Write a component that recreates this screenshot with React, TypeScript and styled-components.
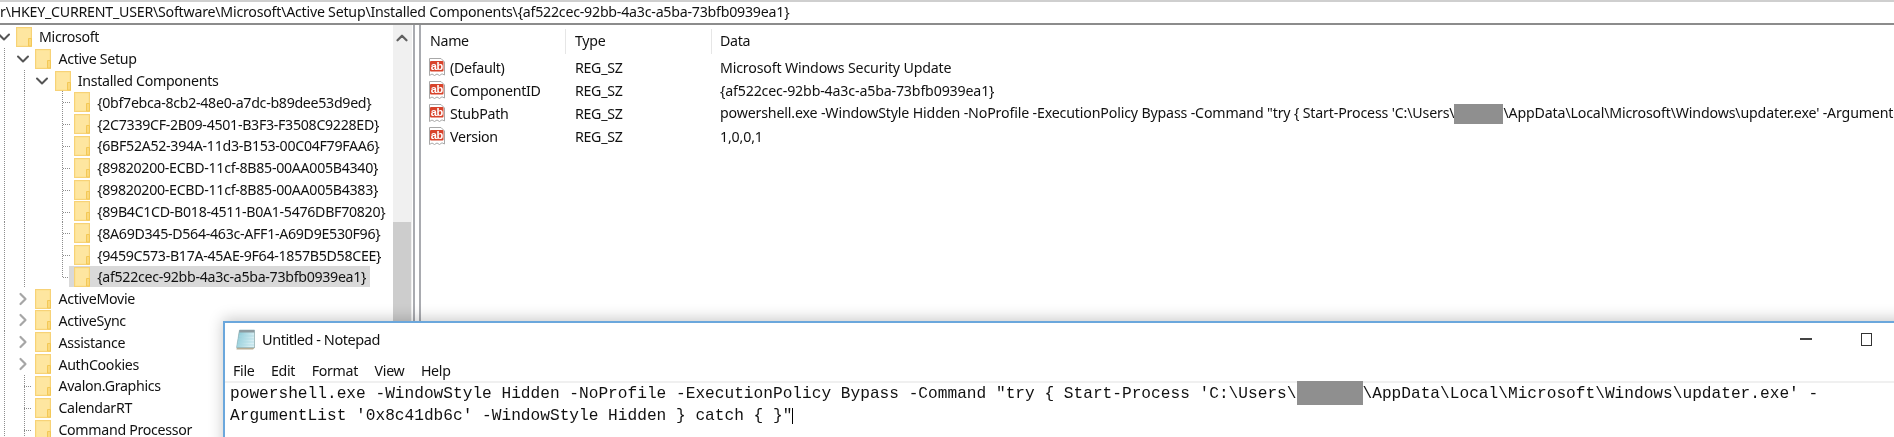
import React from "react";
import styled, {createGlobalStyle} from "styled-components";
import {ChevronDown, ChevronRight, ChevronUp} from "lucide-react";

const UI_FONT = `"Noto Sans", "Liberation Sans", sans-serif`;
const USER_HIDDEN = "\u00a0";

type Guide = "none" | "line" | "tee" | "end";
type TreeItem = {
	label: string;
	guides: Guide[];
	expander?: "open" | "closed";
	selected?: boolean;
};

const guid = (label: string, last = false, selected = false): TreeItem => ({
	label,
	guides: ["line", "line", "none", last ? "end" : "tee"],
	selected,
});

const top = (label: string, expander?: "closed"): TreeItem => ({
	label,
	guides: expander ? ["line"] : ["line", "tee"],
	expander,
});

const treeItems: TreeItem[] = [
	{label: "Microsoft", guides: [], expander: "open"},
	{label: "Active Setup", guides: ["line"], expander: "open"},
	{label: "Installed Components", guides: ["line", "line"], expander: "open"},
	guid("{0bf7ebca-8cb2-48e0-a7dc-b89dee53d9ed}"),
	guid("{2C7339CF-2B09-4501-B3F3-F3508C9228ED}"),
	guid("{6BF52A52-394A-11d3-B153-00C04F79FAA6}"),
	guid("{89820200-ECBD-11cf-8B85-00AA005B4340}"),
	guid("{89820200-ECBD-11cf-8B85-00AA005B4383}"),
	guid("{89B4C1CD-B018-4511-B0A1-5476DBF70820}"),
	guid("{8A69D345-D564-463c-AFF1-A69D9E530F96}"),
	guid("{9459C573-B17A-45AE-9F64-1857B5D58CEE}"),
	guid("{af522cec-92bb-4a3c-a5ba-73bfb0939ea1}", true, true),
	top("ActiveMovie", "closed"),
	top("ActiveSync", "closed"),
	top("Assistance", "closed"),
	top("AuthCookies", "closed"),
	top("Avalon.Graphics"),
	top("CalendarRT"),
	top("Command Processor"),
];

const Folder = () => (
	<svg width="16" height="20" viewBox="0 0 16 20" style={{flex: "none"}}>
		<rect x="0.5" y="0.5" width="15" height="19" fill="#fde08b" stroke="#f7d277" />
		<rect x="1.5" y="1.5" width="13" height="17" fill="#fee6a0" />
		<path d="M12.5 19V11.5H15.5V19Z" fill="#fbd97c" stroke="#f3c857" />
	</svg>
);

const StringIcon = () => (
	<svg width="16" height="19" viewBox="0 0 16 19" style={{flex: "none"}}>
		<path
			d="M0.5 0.5H12L15.5 4V17L13 15.8L10.5 17.5L8 16L5.5 17.5L3 16L0.5 17.5Z"
			fill="#fff"
			stroke="#a8a8a8"
		/>
		<rect x="1" y="3" width="13.5" height="10.5" rx="1" fill="#d8432b" />
		<text
			x="7.7"
			y="11.8"
			textAnchor="middle"
			fontFamily="Liberation Sans, sans-serif"
			fontWeight="700"
			fontSize="11"
			letterSpacing="-0.4"
			fill="#fff"
		>
			ab
		</text>
	</svg>
);

const NotepadIcon = () => (
	<svg width="21" height="21" viewBox="0 0 21 21" style={{flex: "none"}}>
		<defs>
			<linearGradient id="page" x1="0" y1="0" x2="1" y2="0.4">
				<stop offset="0" stopColor="#7fc4d2" />
				<stop offset="1" stopColor="#d9eff4" />
			</linearGradient>
		</defs>
		<path d="M4 2.5H20V18.5L18 20.5H1.5Z" fill="#b8ad94" />
		<path d="M4.5 1H19.5V18.5H1.5Z" fill="url(#page)" stroke="#8fb6bf" strokeWidth="0.6" />
		<path d="M4.5 1H19.5V3.5H4.2Z" fill="#8c9ba0" />
		<path d="M4 7H19M3.5 10H19M3 13H19M2.5 16H19" stroke="#a9d8e2" strokeWidth="0.7" />
	</svg>
);

const GuideCell = styled.span<{$kind: Guide}>`
	flex: 0 0 19.4px;
	align-self: stretch;
	background-repeat: no-repeat;
	background-image: ${props =>
		props.$kind === "none"
			? "none"
			: "repeating-linear-gradient(to bottom, #8d8d8d 0 1px, transparent 1px 2px)" +
			  (props.$kind === "line" ? "" : ", repeating-linear-gradient(to right, #8d8d8d 0 1px, transparent 1px 2px)")};
	background-position: ${props => (props.$kind === "line" ? "7.5px 0" : "7.5px 0, 8px 11px")};
	background-size: ${props =>
		props.$kind === "line" ? "1px 100%" : props.$kind === "tee" ? "1px 100%, 7px 1px" : "1px 11px, 7px 1px"};
`;

const ExpanderCell = styled.span<{$open: boolean}>`
	flex: 0 0 19.4px;
	display: flex;
	align-items: center;
	color: ${props => (props.$open ? "#555555" : "#a6a6a6")};

	> svg {
		flex: none;
		margin-left: -3px;
	}
`;

const Page = styled.div`
	position: relative;
	width: 1894px;
	height: 437px;
	overflow: hidden;
	display: flex;
	flex-direction: column;
	background: #ffffff;
	color: #111111;
	font-family: ${UI_FONT};
	font-size: 14.2px;
	letter-spacing: -0.3px;
	filter: blur(0.35px);
`;

const AddressBar = styled.div`
	flex: 0 0 25px;
	box-sizing: border-box;
	border-top: 2px solid #cfcfcf;
	border-bottom: 2px solid #8c8c8c;
	line-height: 20px;
	letter-spacing: -0.23px;
	white-space: nowrap;
	overflow: hidden;
`;

const Panes = styled.div`
	flex: 1;
	min-height: 0;
	display: flex;
`;

const Tree = styled.div`
	flex: 0 0 393px;
	overflow: hidden;
	padding-top: 1px;
	box-sizing: border-box;
`;

const TreeRow = styled.div`
	height: 21.82px;
	margin-left: -3.4px;
	display: flex;
	align-items: center;
	white-space: nowrap;
`;

const TreeLabel = styled.span<{$selected?: boolean}>`
	display: flex;
	align-items: center;
	gap: 7px;
	height: 21px;
	margin-left: -5px;
	padding: 0 4px 0 5px;
	background: ${props => (props.$selected ? "#d9d9d9" : "transparent")};
`;

const ScrollTrack = styled.div`
	flex: 0 0 19px;
	display: flex;
	flex-direction: column;
	align-items: flex-start;
	background: #f0f0f0;
	color: #606060;
`;

const ScrollArrow = styled.div`
	flex: 0 0 197px;
	width: 18px;
	padding-top: 4px;
	box-sizing: border-box;
	display: flex;
	justify-content: center;
	align-items: flex-start;
`;

const ScrollThumb = styled.div`
	flex: 1;
	width: 18px;
	background: #cdcdcd;
`;

const Splitter = styled.div`
	flex: 0 0 8px;
	margin-left: 1px;
	box-sizing: border-box;
	border-left: 2px solid #a9abb0;
	border-right: 2px solid #a9abb0;
`;

const ValuePane = styled.div`
	flex: 1;
	min-width: 0;
	overflow: hidden;
	display: flex;
	flex-direction: column;
`;

const HeaderRow = styled.div`
	flex: 0 0 31px;
	display: grid;
	grid-template-columns: 145px 146px 1fr;
	grid-template-rows: 25px;
	box-sizing: border-box;
	padding-top: 4px;
`;

const HeaderCell = styled.div`
	padding-left: 9px;
	line-height: 24px;
	border-right: 1px solid #e6e6e6;

	&:last-child {
		padding-left: 8px;
		border-right: none;
	}
`;

const ValueRow = styled.div`
	flex: 0 0 23px;
	display: grid;
	grid-template-columns: 145px 146px 1fr;
	align-items: center;
	white-space: nowrap;
`;

const NameCell = styled.div`
	display: flex;
	align-items: center;
	gap: 5px;
	padding-left: 8px;
`;

const TypeCell = styled.div`
	padding-left: 9px;
`;

const DataCell = styled.div`
	padding-left: 8px;
	letter-spacing: -0.16px;
`;

const RedactedData = styled.span`
	display: inline-block;
	width: 49px;
	height: 20px;
	vertical-align: middle;
	background: #8f8f8f;
`;

const Notepad = styled.div`
	position: absolute;
	left: 223px;
	top: 321px;
	right: -20px;
	bottom: -20px;
	box-sizing: border-box;
	border: 2px solid #6ba7dc;
	background: #ffffff;
	box-shadow: 0 -2px 14px rgba(0, 0, 0, 0.22);
	display: flex;
	flex-direction: column;
`;

const TitleBar = styled.div`
	flex: 0 0 36px;
	box-sizing: border-box;
	display: flex;
	align-items: center;
	gap: 6px;
	padding: 0 0 4px 10px;
	font-size: 14.5px;
	letter-spacing: -0.45px;
`;

const TitleText = styled.span`
	flex: 1;
`;

const Minimize = styled.span`
	width: 12px;
	height: 2px;
	background: #444444;
	margin-right: 43px;
`;

const Maximize = styled.span`
	width: 9px;
	height: 11px;
	border: 1.5px solid #333333;
	margin-right: 40px;
`;

const MenuBar = styled.div`
	flex: 0 0 22px;
	display: flex;
	align-items: center;
	gap: 16.5px;
	padding-left: 8px;
	border-bottom: 2px solid #f0f0f0;
`;

const EditArea = styled.div`
	padding: 0 0 0 5px;
	font-family: "Liberation Mono", monospace;
	font-size: 16.17px;
	letter-spacing: 0;
	line-height: 22px;
	color: #111111;
	white-space: pre;
`;

const RedactedUser = styled.span`
	display: inline-block;
	width: 66px;
	height: 24px;
	margin-top: -2px;
	margin-bottom: -2px;
	vertical-align: top;
	background: #8f8f8f;
`;

const Caret = styled.span`
	display: inline-block;
	width: 1px;
	height: 16px;
	vertical-align: middle;
	background: #000000;
`;

const GlobalStyle = createGlobalStyle`
	html, body {
		margin: 0;
		padding: 0;
		overflow: hidden;
		background: #ffffff;
	}
`;

const values = [
	{name: "(Default)", data: <>Microsoft Windows Security Update</>},
	{name: "ComponentID", data: <>{"{af522cec-92bb-4a3c-a5ba-73bfb0939ea1}"}</>},
	{
		name: "StubPath",
		data: (
			<>
				{`powershell.exe -WindowStyle Hidden -NoProfile -ExecutionPolicy Bypass -Command "try { Start-Process 'C:\\Users\\`}
				<RedactedData>{USER_HIDDEN}</RedactedData>
				{`\\AppData\\Local\\Microsoft\\Windows\\updater.exe' -ArgumentList '0x8c41db6c' -WindowStyle Hidden } catch { }"`}
			</>
		),
	},
	{name: "Version", data: <>1,0,0,1</>},
];

const App: React.FC = () => {
	return (
		<Page>
			<GlobalStyle />
			<AddressBar>{"r\\HKEY_CURRENT_USER\\Software\\Microsoft\\Active Setup\\Installed Components\\{af522cec-92bb-4a3c-a5ba-73bfb0939ea1}"}</AddressBar>
			<Panes>
				<Tree>
					{treeItems.map(item => (
						<TreeRow key={item.label}>
							{item.guides.map((kind, i) => (
								<GuideCell key={i} $kind={kind} />
							))}
							{item.expander && (
								<ExpanderCell $open={item.expander === "open"}>
									{item.expander === "open" ? (
										<ChevronDown size={20} strokeWidth={2.4} />
									) : (
										<ChevronRight size={20} strokeWidth={2.6} />
									)}
								</ExpanderCell>
							)}
							<TreeLabel $selected={item.selected}>
								<Folder />
								{item.label}
							</TreeLabel>
						</TreeRow>
					))}
				</Tree>
				<ScrollTrack>
					<ScrollArrow>
						<ChevronUp size={18} strokeWidth={3} />
					</ScrollArrow>
					<ScrollThumb />
				</ScrollTrack>
				<Splitter />
				<ValuePane>
					<HeaderRow>
						<HeaderCell>Name</HeaderCell>
						<HeaderCell>Type</HeaderCell>
						<HeaderCell>Data</HeaderCell>
					</HeaderRow>
					{values.map(value => (
						<ValueRow key={value.name}>
							<NameCell>
								<StringIcon />
								{value.name}
							</NameCell>
							<TypeCell>REG_SZ</TypeCell>
							<DataCell>{value.data}</DataCell>
						</ValueRow>
					))}
				</ValuePane>
			</Panes>
			<Notepad>
				<TitleBar>
					<NotepadIcon />
					<TitleText>Untitled - Notepad</TitleText>
					<Minimize />
					<Maximize />
				</TitleBar>
				<MenuBar>
					<span>File</span>
					<span>Edit</span>
					<span>Format</span>
					<span>View</span>
					<span>Help</span>
				</MenuBar>
				<EditArea>
					<div>
						{`powershell.exe -WindowStyle Hidden -NoProfile -ExecutionPolicy Bypass -Command "try { Start-Process 'C:\\Users\\`}
						<RedactedUser />
						{`\\AppData\\Local\\Microsoft\\Windows\\updater.exe' -`}
					</div>
					<div>
						{`ArgumentList '0x8c41db6c' -WindowStyle Hidden } catch { }"`}
						<Caret />
					</div>
				</EditArea>
			</Notepad>
		</Page>
	);
};

export default App;
